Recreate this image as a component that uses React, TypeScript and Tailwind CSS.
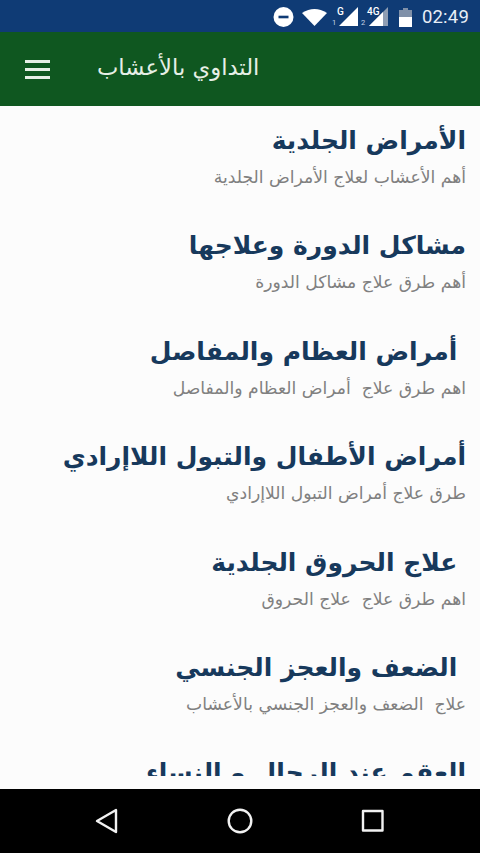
const topics = [
  { title: "الأمراض الجلدية", sub: "أهم الأعشاب لعلاج الأمراض الجلدية" },
  { title: "مشاكل الدورة وعلاجها", sub: "أهم طرق علاج مشاكل الدورة" },
  { title: "\u00a0أمراض العظام والمفاصل", sub: "اهم طرق علاج  أمراض العظام والمفاصل" },
  { title: "أمراض الأطفال والتبول اللاإرادي", sub: "طرق علاج أمراض التبول اللاإرادي" },
  { title: "\u00a0علاج الحروق الجلدية", sub: "اهم طرق علاج  علاج الحروق" },
  { title: "\u00a0الضعف والعجز الجنسي", sub: "علاج  الضعف والعجز الجنسي بالأعشاب" },
  { title: "العقم عند الرجال و النساء", sub: "" },
];

function StatusBar() {
  return (
    <div className="flex h-8 shrink-0 items-center justify-end bg-[#0f3b75] pt-[2px] pr-[11px] text-white">
      <svg width="21" height="20" viewBox="0 0 21 20">
        <circle cx="10.5" cy="10" r="10" fill="#fff" />
        <rect x="5.5" y="8.7" width="10" height="2.6" fill="#0f3b75" />
      </svg>
      <svg className="ml-2" width="25" height="18" viewBox="0 0 25 18">
        <path d="M0 5 Q12.5 -3 25 5 L12.5 18 Z" fill="#fff" />
      </svg>
      <svg className="ml-1" width="27" height="20" viewBox="0 0 27 20">
        <path d="M8 19 L27 0 V19 Z" fill="#fff" />
        <text x="6" y="8" fontSize="10" fontWeight="500" fill="#fff" fontFamily="Roboto, sans-serif">G</text>
        <text x="1" y="18" fontSize="7.5" fill="#c6d3e4" fontFamily="Roboto, sans-serif">1</text>
      </svg>
      <svg className="ml-[3px]" width="27" height="20" viewBox="0 0 27 20">
        <path d="M8 19 L27 0 V19 Z" fill="#8e9db3" />
        <path d="M8 19 L22 5 V19 Z" fill="#fff" />
        <text x="6" y="8" fontSize="10" fontWeight="500" fill="#fff" fontFamily="Roboto, sans-serif">4G</text>
        <text x="0" y="18" fontSize="7.5" fill="#c6d3e4" fontFamily="Roboto, sans-serif">2</text>
      </svg>
      <svg className="ml-[11px]" width="13" height="19" viewBox="0 0 13 19">
        <path d="M4 0 H9 V2 H13 V19 H0 V2 H4 Z" fill="#7f90a8" />
        <rect x="0" y="9" width="13" height="10" fill="#fff" />
      </svg>
      <span className="ml-[10px] font-['Roboto',sans-serif] text-[18.5px] leading-none tracking-[0.2px] text-[#e8eef6]">02:49</span>
    </div>
  );
}

function Header() {
  return (
    <div className="flex h-[74px] shrink-0 items-center bg-[#0f5720] pl-[25px] text-[#e6efe6]">
      <div className="flex w-[25px] flex-col gap-[5px]">
        <span className="h-[3px] bg-[#e6efe6]" />
        <span className="h-[3px] bg-[#e6efe6]" />
        <span className="h-[3px] bg-[#e6efe6]" />
      </div>
      <h1 dir="rtl" className="mb-[3px] ml-[47px] font-['DejaVu_Sans',sans-serif] text-[22.7px] font-normal leading-none">
        التداوي بالأعشاب
      </h1>
    </div>
  );
}

function NavBar() {
  return (
    <div className="flex h-16 shrink-0 items-center bg-black pl-[95px]">
      <svg width="24" height="26" viewBox="0 0 24 26" fill="none" stroke="#f2f2f2" strokeWidth="2.4" strokeLinejoin="round">
        <path d="M21 2 V24 L2 13 Z" />
      </svg>
      <svg className="ml-[108px]" width="26" height="26" viewBox="0 0 26 26" fill="none" stroke="#f2f2f2" strokeWidth="2.4">
        <circle cx="13" cy="13" r="11.3" />
      </svg>
      <svg className="ml-[108px]" width="24" height="24" viewBox="0 0 24 24" fill="none" stroke="#f2f2f2" strokeWidth="2.4" strokeLinejoin="round">
        <rect x="2" y="2" width="19.5" height="19.5" />
      </svg>
    </div>
  );
}

export default function App() {
  return (
    <div className="flex h-[853px] w-[480px] flex-col overflow-hidden bg-[#fcfcfc] font-['DejaVu_Sans',sans-serif]">
      <StatusBar />
      <Header />
      <div className="min-h-0 flex-1 pb-[13px]">
        <div dir="rtl" className="h-full overflow-hidden pr-[14px]">
          {topics.map((t) => (
            <div key={t.title} className="h-[105.4px] pt-4">
              <h2 className="text-[25px] font-bold leading-[38px] whitespace-pre text-[#17395c]">{t.title}</h2>
              {t.sub ? (
                <p className="mt-[6px] text-[17.2px] leading-[22px] whitespace-pre text-[#808080]">{t.sub}</p>
              ) : null}
            </div>
          ))}
        </div>
      </div>
      <NavBar />
    </div>
  );
}
